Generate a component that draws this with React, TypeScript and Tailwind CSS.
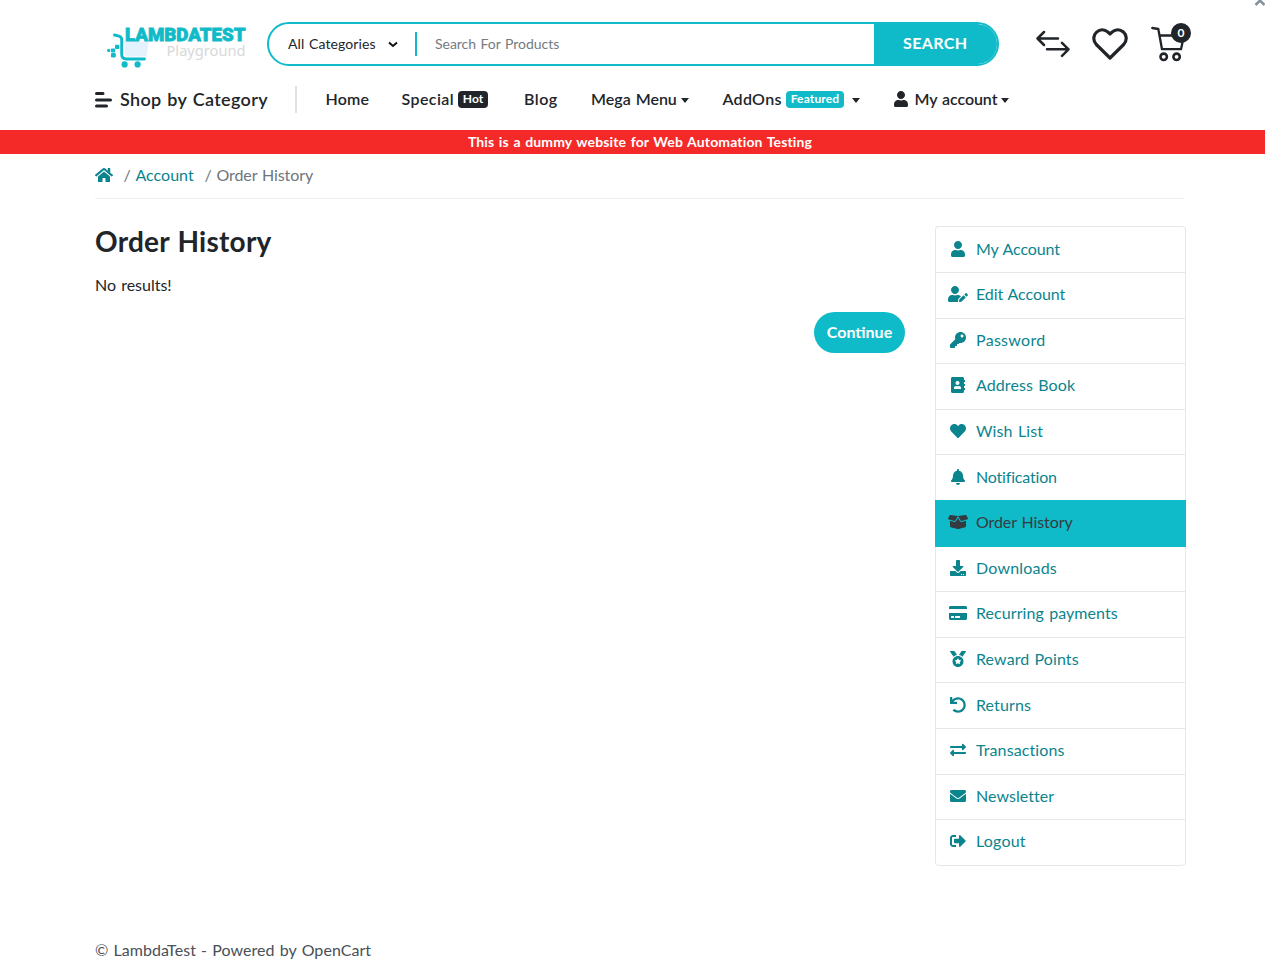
import type { ReactNode } from "react";
import type { IconType } from "react-icons";
import {
  FaAddressBook,
  FaBell,
  FaBoxOpen,
  FaCreditCard,
  FaDownload,
  FaEnvelope,
  FaExchangeAlt,
  FaHeart,
  FaHome,
  FaKey,
  FaMedal,
  FaSignOutAlt,
  FaUndo,
  FaUser,
  FaUserEdit,
} from "react-icons/fa";

type SideItem = { label: string; icon: IconType; size?: string; tracking?: string; active?: boolean };

const sideItems: SideItem[] = [
  { label: "My Account", icon: FaUser, tracking: "tracking-[-0.15px]" },
  { label: "Edit Account", icon: FaUserEdit, size: "h-4 w-5", tracking: "tracking-[-0.08px]" },
  { label: "Password", icon: FaKey, tracking: "tracking-[0.3px]" },
  { label: "Address Book", icon: FaAddressBook, tracking: "tracking-[0.1px]" },
  { label: "Wish List", icon: FaHeart, tracking: "tracking-[0.12px]" },
  { label: "Notification", icon: FaBell, tracking: "tracking-[-0.18px]" },
  { label: "Order History", icon: FaBoxOpen, size: "h-4 w-5", tracking: "tracking-[-0.1px]", active: true },
  { label: "Downloads", icon: FaDownload, tracking: "tracking-[0.2px]" },
  { label: "Recurring payments", icon: FaCreditCard, size: "h-4 w-[18px]", tracking: "tracking-[0.08px]" },
  { label: "Reward Points", icon: FaMedal, tracking: "tracking-[0.1px]" },
  { label: "Returns", icon: FaUndo, tracking: "tracking-[0.12px]" },
  { label: "Transactions", icon: FaExchangeAlt, tracking: "tracking-[0.1px]" },
  { label: "Newsletter", icon: FaEnvelope, tracking: "tracking-[0.05px]" },
  { label: "Logout", icon: FaSignOutAlt, tracking: "tracking-[0.2px]" },
];

function Logo() {
  return (
    <svg width="142" height="46" viewBox="0 0 142 46" className="shrink-0 overflow-visible">
      <path d="M17 18.500H42L39.500 33.500H18.500Z" fill="#e3f2fd" />
      <path
        d="M7.500 12L12 13.200Q14.700 14 14.700 17V31.500Q14.700 36 19.500 36H37.500"
        fill="none"
        stroke="#10bbc9"
        strokeWidth="2.900"
        strokeLinecap="round"
      />
      <g fill="#10bbc9">
        <rect x="8" y="21.700" width="4.300" height="4.300" rx="1" />
        <rect x="3.900" y="25.500" width="4.300" height="4" rx="1" />
        <rect x="0.200" y="26" width="3" height="3" rx="1" />
        <rect x="4" y="30" width="4.800" height="4.500" rx="1.200" />
        <circle cx="17.600" cy="41.400" r="3.100" />
        <circle cx="30.600" cy="41.400" r="3.100" />
      </g>
      <text x="18" y="18" textLength="120.500" lengthAdjust="spacingAndGlyphs" className="fill-[#10bbc9] stroke-[#10bbc9] stroke-[0.800px] font-['Roboto'] text-[19px] font-black">
        LAMBDATEST
      </text>
      <text x="59.500" y="32.500" textLength="79" lengthAdjust="spacingAndGlyphs" className="fill-[#d8d8d8] font-['Noto_Sans'] text-[15px]">
        Playground
      </text>
    </svg>
  );
}

function Caret() {
  return <span className="mt-0.5 border-x-[4.800px] border-t-[5px] border-x-transparent border-t-[#212529]" />;
}

function NavItem({ width, children }: { width: string; children: ReactNode }) {
  return <a className={`flex shrink-0 items-center whitespace-nowrap ${width}`}>{children}</a>;
}

function Header() {
  return (
    <header className="h-[130px] pl-[95px]">
      <div className="flex h-[88px] items-center">
        <div className="w-[172px] pl-3 pt-1">
          <Logo />
        </div>
        <div className="flex h-11 w-[732px] items-center overflow-hidden rounded-full border-2 border-[#10bbc9] bg-white text-[14px]">
          <div className="flex w-[146px] items-center justify-between pl-[19px] pr-[17px] text-[#212529]">
            <span className="tracking-[0.1px]">All Categories</span>
            <svg width="10" height="7" viewBox="0 0 10 7" fill="none" stroke="#111" strokeWidth="2">
              <path d="M1 1.500L5 5L9 1.500" />
            </svg>
          </div>
          <div className="h-6 w-0.5 bg-[#10bbc9]" />
          <div className="flex-1 pl-[18px] tracking-[-0.030px] text-[#757b80]">Search For Products</div>
          <div className="flex h-full w-[123.500px] items-center justify-center bg-[#10bbc9] pb-0.5 text-[16px] font-bold tracking-[0.400px] text-white">
            SEARCH
          </div>
        </div>
        <div className="flex h-full items-center pl-[37px] text-[#212529]">
          <svg width="34" height="28" viewBox="0 0 34 28" fill="none" stroke="currentColor" strokeWidth="2.500" strokeLinecap="round" strokeLinejoin="round">
            <path d="M22 8.500H1.500M8 2L1.500 8.500L8 15M11 19.300H32.500M26 12.800L32.500 19.300L26 25.800" />
          </svg>
          <svg width="36" height="32" viewBox="0 0 36 32" fill="none" stroke="currentColor" strokeWidth="3.200" strokeLinejoin="round" className="ml-[22px]">
            <path d="M18 30L4.300 16.500C0.600 12.500 1.200 7 4.600 4.100C8.700 0.700 14 1.400 18 6C22 1.400 27.300 0.700 31.400 4.100C34.800 7 35.400 12.500 31.700 16.500Z" />
          </svg>
          <div className="relative ml-[23px] h-[40px] w-[42px]">
            <svg width="42" height="40" viewBox="0 0 42 40" fill="none" stroke="currentColor" strokeWidth="2.300" strokeLinecap="round" strokeLinejoin="round">
              <path d="M1.300 4L7.300 5L11 25.200H30L33 11.500H8.500" />
              <circle cx="12.700" cy="32.800" r="3.200" strokeWidth="2.600" />
              <circle cx="25.600" cy="32.800" r="3.200" strokeWidth="2.600" />
            </svg>
            <span className="absolute left-5 top-[-1px] flex size-5 items-center justify-center rounded-full bg-[#212529] text-[12px] font-bold text-white">
              0
            </span>
          </div>
        </div>
      </div>
      <nav className="-mt-px flex h-6 items-center text-[16px] font-semibold text-[#212529]">
        <a className="flex w-[200px] shrink-0 items-center gap-2 whitespace-nowrap text-[18px] tracking-[0.330px]">
          <svg width="17" height="17" viewBox="0 0 17 17" fill="none" stroke="currentColor" strokeWidth="3" strokeLinecap="round">
            <path d="M1.500 2.500H8M1.500 9H15.500M1.500 15H11.500" />
          </svg>
          <span className="-mt-px">Shop by Category</span>
        </a>
        <div className="mr-[28.500px] h-[27px] w-0.5 shrink-0 bg-[#dee2e6]" />
        <NavItem width="w-[76px]">
          <span className="tracking-[0.150px]">Home</span>
        </NavItem>
        <NavItem width="w-[122.500px]">
          <span className="w-[56.500px] tracking-[0.400px]">Special</span>
          <span className="flex h-[17px] w-[30px] items-center justify-center rounded bg-[#212529] text-[12px] font-bold text-white">Hot</span>
        </NavItem>
        <NavItem width="w-[67px]">
          <span className="tracking-[0.500px]">Blog</span>
        </NavItem>
        <NavItem width="w-[131.500px]">
          <span className="w-[89.500px]">Mega Menu</span>
          <Caret />
        </NavItem>
        <NavItem width="w-[170px]">
          <span className="w-[63.500px] tracking-[0.300px]">AddOns</span>
          <span className="mr-2 flex h-[17px] w-[58px] items-center justify-center rounded bg-[#10bbc9] text-[12px] font-bold tracking-[0.150px] text-white">Featured</span>
          <Caret />
        </NavItem>
        <NavItem width="w-[120px]">
          <FaUser className="mr-1.5 size-4" />
          <span className="w-[86.500px] tracking-[-0.080px]">My account</span>
          <Caret />
        </NavItem>
      </nav>
    </header>
  );
}

function Sidebar() {
  return (
    <ul className="mt-[27.400px] w-[250.500px] shrink-0 rounded border-x border-t border-[#e6e7e8]">
      {sideItems.map(({ label, icon: Icon, size, tracking, active }) => (
        <li
          key={label}
          className={`flex h-[45.600px] items-center border-b pb-[2px] last:rounded-b ${
            active
              ? "-mx-px border-[#10bbc9] bg-[#10bbc9] pl-[13.400px] text-[#343a40] shadow-[0_-1px_0_#10bbc9]"
              : "border-[#e6e7e8] pl-[12.400px] text-[#0b848e]"
          }`}
        >
          <span className="mr-[7.600px] flex w-5 shrink-0 justify-center">
            <Icon className={`shrink-0 ${size ?? "size-4"}`} />
          </span>
          <span className={tracking}>{label}</span>
        </li>
      ))}
    </ul>
  );
}

export default function App() {
  return (
    <div className="relative h-[980px] w-full overflow-hidden bg-white font-['Lato',sans-serif] text-[16px] leading-6 text-[#212529] [word-spacing:1px]">
      <svg width="12" height="6" viewBox="0 0 12 6" fill="none" stroke="#84919b" strokeWidth="2.500" className="absolute left-[1254px] top-0">
        <path d="M1.500 5L6 0.500L10.500 5" />
      </svg>
      <Header />
      <div className="h-6 bg-[#f42a28] pl-[15px] text-center text-[14px] font-bold leading-[23px] tracking-[0.140px] text-white">
        This is a dummy website for Web Automation Testing
      </div>
      <main className="ml-[95px] w-[1090.400px]">
        <div className="flex h-[45px] items-center border-b border-[#f0f1f2] pb-0.5 text-[#6c757d]">
          <FaHome className="mr-[10.500px] size-[18px] text-[#0b848e]" />
          <span className="w-3">/</span>
          <span className="w-[69px] text-[#0b848e]">Account</span>
          <span className="w-3">/</span>
          <span className="tracking-[-0.100px]">Order History</span>
        </div>
        <div className="flex gap-[30px]">
          <section className="w-[810px] shrink-0">
            <h1 className="mt-[25px] text-[28px] font-bold leading-[34px] tracking-[0.250px]">Order History</h1>
            <p className="mt-[15px]">No results!</p>
            <div className="mt-[15px] flex justify-end">
              <button className="h-[41px] w-[91px] rounded-full bg-[#10bbc9] pb-0.5 font-bold text-white">Continue</button>
            </div>
          </section>
          <Sidebar />
        </div>
      </main>
      <footer className="ml-[95px] mt-[72px] tracking-[0.060px] text-[#495057]">© LambdaTest - Powered by OpenCart</footer>
    </div>
  );
}
